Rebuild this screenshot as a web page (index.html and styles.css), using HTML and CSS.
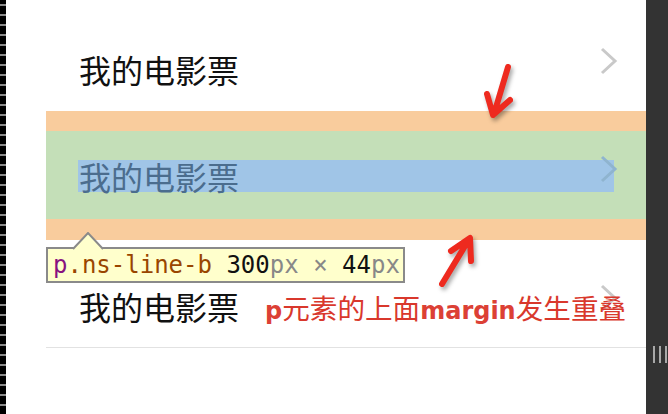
FILE: index.html
```html
<!DOCTYPE html>
<html lang="zh">
<head>
<meta charset="utf-8">
<link rel="stylesheet" href="styles.css">
</head>
<body>
<div class="page">
  <div class="strip"></div>
  <main class="main">
    <ul class="list">
      <li class="row row-1">
        <span class="label">我的电影票</span>
        <svg class="chev" width="18" height="28" viewBox="0 0 18 28"><polyline points="2,2 15,14 2,26" fill="none" stroke="#c9c9c9" stroke-width="3"/></svg>
      </li>
      <li class="hl-margin">
        <div class="hl-padding">
          <div class="hl-content">
            <span class="label label-hl">我的电影票</span>
            <svg class="chev chev-hl" width="18" height="28" viewBox="0 0 18 28"><polyline points="2,2 15,14 2,26" fill="none" stroke="#8fb4cf" stroke-width="3"/></svg>
          </div>
        </div>
      </li>
      <li class="row row-3">
        <span class="label">我的电影票</span>
        <svg class="chev" width="18" height="28" viewBox="0 0 18 28"><polyline points="2,2 15,14 2,26" fill="none" stroke="#c9c9c9" stroke-width="3"/></svg>
      </li>
    </ul>
  </main>
  <aside class="side">
    <span class="grip"></span><span class="grip"></span><span class="grip"></span>
  </aside>

  <div class="tip">
    <svg class="tip-arrow" width="30" height="19" viewBox="0 0 30 19"><polygon points="0,17 15,1 30,17 30,19 0,19" fill="#ffffcc"/><polyline points="0,17 15,1 30,17" fill="none" stroke="#8a8a8a" stroke-width="2"/></svg>
    <span class="t-tag">p</span><span class="t-cls">.ns-line-b</span> <span class="t-num">300</span><span class="t-unit">px</span> <span class="t-unit">×</span> <span class="t-num">44</span><span class="t-unit">px</span>
  </div>

  <div class="note"><b>p</b>元素的上面<b>margin</b>发生重叠</div>

  <svg class="arrows" width="668" height="414" viewBox="0 0 668 414">
    <path d="M508,67 L494,114 M487,94 L493,115 L510,100" fill="none" stroke="#ee2a1f" stroke-width="6" stroke-linecap="round" stroke-linejoin="round"/>
    <path d="M442,284 L468,241 M451,251 L470,238 L471,261" fill="none" stroke="#ee2a1f" stroke-width="6" stroke-linecap="round" stroke-linejoin="round"/>
  </svg>
</div>
</body>
</html>
```
FILE: styles.css
```css
* { box-sizing: border-box; }
html, body { margin: 0; padding: 0; background: #fff; }
.page {
  position: relative;
  width: 668px;
  height: 414px;
  display: flex;
  overflow: hidden;
  font-family: "Noto Sans CJK SC", "Noto Sans", sans-serif;
}
.strip {
  width: 6px;
  flex: none;
  background: repeating-linear-gradient(to bottom, #000 0 4px, #8a8a8a 4px 6px, #000 6px 10px);
}
.main {
  flex: 1;
  padding-left: 40px;
}
.list {
  list-style: none;
  margin: 0;
  padding: 0;
  width: 600px;
}
.row {
  display: flex;
  align-items: flex-start;
  padding-left: 33px;
  padding-right: 28px;
}
.row-1 { height: 111px; padding-top: 47px; }
.row-3 { height: 108px; padding-top: 44px; border-bottom: 1px solid #e2e2e2; }
.label {
  font-size: 32px;
  line-height: 32px;
  color: #111;
  margin-top: 6px;
}
.chev { margin-left: auto; flex: none; }
.hl-margin {
  background: #f9cc9d;
  padding: 20px 0 21px;
}
.hl-padding {
  background: #c4dfb8;
  height: 88px;
  padding: 29px 32px 27px 32px;
}
.hl-content {
  background: #a0c5e7;
  height: 32px;
  display: flex;
  align-items: flex-start;
  padding-left: 1px;
}
.label-hl { margin-top: 0; color: #4b6d8e; }
.chev-hl { margin-top: -5px; margin-right: -4px; }
.side {
  width: 22px;
  flex: none;
  background: #333;
  display: flex;
  align-items: flex-start;
  gap: 4px;
  padding: 346px 0 0 7px;
}
.grip { width: 2px; height: 17px; background: #a8a8a8; }
.tip {
  position: absolute;
  left: 46px;
  top: 247px;
  width: 359px;
  height: 36px;
  background: #ffffcc;
  border: 2px solid #8a8a8a;
  padding-left: 5px;
  font-family: "DejaVu Sans Mono", monospace;
  font-size: 24px;
  line-height: 32px;
  white-space: nowrap;
}
.tip-arrow { position: absolute; left: 25px; top: -17px; }
.t-tag { color: #881280; }
.t-cls { color: #994500; }
.t-num { color: #111; }
.t-unit { color: #888; }
.note {
  position: absolute;
  left: 265px;
  top: 293px;
  font-size: 27.6px;
  line-height: 28px;
  color: #d9382c;
  white-space: nowrap;
}
.note b {
  font-family: "DejaVu Sans", sans-serif;
  font-weight: 700;
  font-size: 24px;
  color: #dc4035;
}
.arrows {
  position: absolute;
  left: 0;
  top: 0;
  pointer-events: none;
  filter: drop-shadow(2px 3px 2px rgba(0,0,0,0.35));
}
```
